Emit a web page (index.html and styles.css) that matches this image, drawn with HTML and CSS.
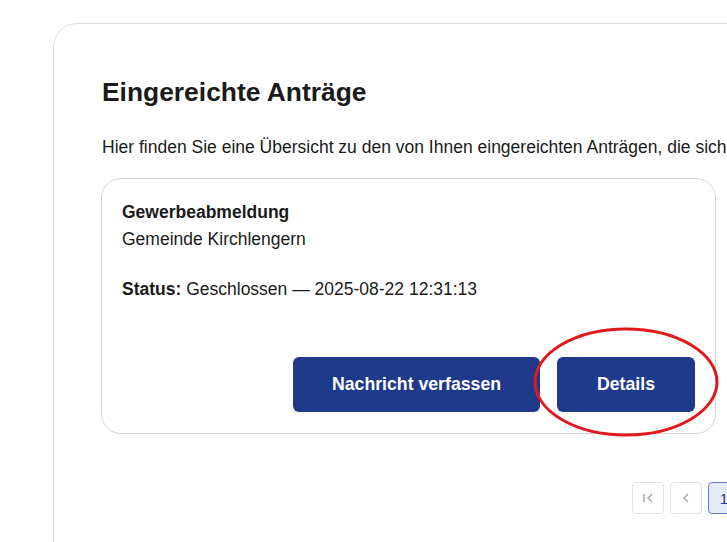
FILE: index.html
```html
<!DOCTYPE html>
<html lang="de">
<head>
    <meta charset="UTF-8">
    <meta name="viewport" content="width=device-width, initial-scale=1.0">
    <title>Eingereichte Anträge</title>
    <link rel="stylesheet" href="styles.css">
</head>
<body>
    <div class="page">
        <div class="panel">
            <h1 class="panel-title">Eingereichte Anträge</h1>
            <p class="intro">Hier finden Sie eine Übersicht zu den von Ihnen eingereichten Anträgen, die sich</p>

            <div class="request-card">
                <div class="request-name">Gewerbeabmeldung</div>
                <div class="request-office">Gemeinde Kirchlengern</div>
                <div class="request-status"><strong>Status:</strong> Geschlossen — 2025-08-22 12:31:13</div>

                <div class="actions">
                    <button class="btn">Nachricht verfassen</button>
                    <button class="btn btn-details">
                        Details
                        <svg class="marker" viewBox="0 0 188 112" aria-hidden="true">
                            <ellipse cx="94" cy="56" rx="91" ry="53" fill="none" stroke="#e0191c" stroke-width="3"/>
                        </svg>
                    </button>
                </div>
            </div>

            <div class="pagination">
                <button class="page-btn" aria-label="Erste Seite">
                    <svg viewBox="0 0 16 16"><path d="M4 4v8M12 4l-4 4 4 4" fill="none" stroke="#a3a3a3" stroke-width="1.4"/></svg>
                </button>
                <button class="page-btn" aria-label="Vorherige Seite">
                    <svg viewBox="0 0 16 16"><path d="M10 4l-4 4 4 4" fill="none" stroke="#a3a3a3" stroke-width="1.4"/></svg>
                </button>
                <button class="page-btn active">1</button>
            </div>
        </div>
    </div>
</body>
</html>
```

FILE: styles.css
```css
html, body {
    margin: 0;
    padding: 0;
    overflow: hidden;
}

body {
    font-family: "Liberation Sans", Arial, sans-serif;
    color: #1a1a1a;
    background: #fff;
}

.page {
    padding: 23px 0 0 53px;
    width: 800px;
}

.panel {
    width: 664px;
    min-height: 600px;
    border: 1px solid #dcdcdc;
    border-radius: 24px;
    padding: 48px 48px 0 47px;
}

.panel-title {
    font-size: 26.4px;
    font-weight: bold;
    margin: 0 0 0 1px;
    line-height: 40px;
}

.intro {
    font-size: 17.5px;
    margin: 23px 0 0 1px;
    line-height: 24px;
    white-space: nowrap;
}

.request-card {
    border: 1px solid #d4d4d4;
    border-radius: 20px;
    width: 573px;
    padding: 22px 20px 21px 20px;
    margin-top: 19px;
}

.request-name {
    font-size: 17.5px;
    font-weight: bold;
    line-height: 22px;
}

.request-office {
    font-size: 17.5px;
    line-height: 26px;
    margin-top: 3px;
}

.request-status {
    font-size: 17.5px;
    line-height: 26px;
    margin-top: 24px;
}

.request-status strong {
    font-weight: bold;
}

.actions {
    display: flex;
    justify-content: flex-end;
    gap: 17px;
    margin-top: 55px;
}

.btn {
    position: relative;
    background-color: #1f3a8a;
    color: #fff;
    border: none;
    border-radius: 6px;
    height: 55px;
    width: 247px;
    padding: 0;
    font-family: "Liberation Sans", Arial, sans-serif;
    font-size: 17.7px;
    font-weight: bold;
    cursor: pointer;
}

.btn-details {
    width: 138px;
}

.marker {
    position: absolute;
    left: -25px;
    top: -31px;
    width: 188px;
    height: 112px;
    pointer-events: none;
}

.pagination {
    display: flex;
    gap: 6px;
    margin: 48px 0 0 531px;
}

.page-btn {
    width: 32px;
    height: 32px;
    flex: none;
    border: 1px solid #e3e3e3;
    border-radius: 4px;
    background: #fff;
    padding: 0;
    display: flex;
    align-items: center;
    justify-content: center;
    font-family: "Liberation Sans", Arial, sans-serif;
    font-size: 15px;
}

.page-btn svg {
    width: 16px;
    height: 16px;
}

.page-btn.active {
    background: #e6eaf6;
    border-color: #6a7dc0;
    color: #1f3a8a;
}
```
